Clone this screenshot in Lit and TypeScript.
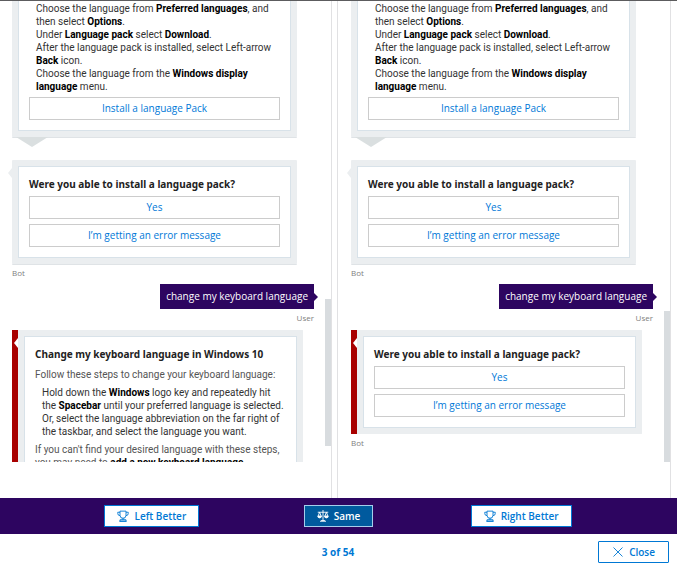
import { LitElement, html, css, svg, nothing } from "lit";
import { customElement, property } from "lit/decorators.js";

const trophy = svg`<path d="M4 1.500h8v5.500a4 4 0 0 1-8 0zM4 3H1v1.500A3 3 0 0 0 4 7.500M12 3h3v1.500A3 3 0 0 1 12 7.500M7 11v2M9 11v2M4 15V13h8v2zM3 15h10"/>`;
const scales = svg`<path d="M1 3h14M8 0v13.500M4 15h8M5.500 14h5M3.500 3 1.500 8M3.500 3l2 5M12.500 3l-2 5M12.500 3l2 5"/><path class="solid" d="M1 8h5a2.500 2.500 0 0 1-5 0zM10 8h5a2.500 2.500 0 0 1-5 0z"/>`;
const cross = svg`<path d="M2 2l12 12M14 2 2 14"/>`;

@customElement("chat-card")
class ChatCard extends LitElement {
  @property({ type: Boolean, reflect: true }) flagged = false;
  @property({ type: Boolean, reflect: true }) tail = false;
  static styles = css`
    :host { display: block; position: relative; box-sizing: border-box; width: 285px; max-width: 100%; border: 6px solid #ebeef0; border-radius: 1px; box-shadow: 0 1px 0 #dfe3e6; }
    :host([flagged]) { width: 291px; border-left: 0; box-shadow: none; display: flex; }
    .bar { flex: none; width: 6px; margin: -6px 0; background: #a80000; border-right: 6px solid #ebeef0; }
    .body { flex: 1; min-width: 0; box-sizing: border-box; background: #fff; border: 1px solid #d8e2e9; padding: 8px 10px 10px; }
    .notch { position: absolute; top: 2px; left: -10px; border: solid transparent; border-width: 5px 4px 5px 0; border-right-color: #ebeef0; }
    :host([flagged]) .notch { left: 2px; border-right-color: #fff; }
    .tail { position: absolute; top: calc(100% + 6px); left: -2px; border: solid transparent; border-width: 10px 16px 0; border-top-color: #dadfe0; }
  `;
  render() {
    return html`${this.flagged ? html`<div class="bar"></div>` : nothing}
      <div class="body"><slot></slot></div>
      <span class=${this.tail ? "tail" : "notch"}></span>`;
  }
}

@customElement("app-root")
class AppRoot extends LitElement {
  static styles = css`
    :host { display: flex; flex-direction: column; height: 100vh; overflow: hidden; box-sizing: border-box; border-top: 1px solid #5c5c5e; background: #fff; color: #333; font: 10px/13px "Open Sans", "Noto Sans", sans-serif; }
    button { font: inherit; cursor: pointer; }
    .panes { flex: 1; min-height: 0; display: flex; gap: 5px; padding-right: 6px; }
    .pane { flex: 1 1 0; min-width: 0; position: relative; padding: 0 0 36px 12px; border-right: 1px solid #e1e1e3; }
    .pane + .pane { padding-left: 13px; border-left: 1px solid #e1e1e3; }
    .chat { height: 100%; overflow: hidden; margin-left: -6px; padding-left: 6px; }
    .thumb { position: absolute; right: 0; width: 6px; top: 298px; height: 147px; background: #d8dcdf; }
    .right .thumb { top: 310px; height: 151px; }
    .first { margin-top: -27px; margin-bottom: 23px; }
    .steps { list-style: none; margin: 0; padding: 0 0 0 7px; color: #333; }
    .steps, p { font-family: Roboto, "Open Sans", sans-serif; }
    b { color: #000; font-weight: 700; }
    h2 { margin: 0 0 3px; font: 700 10px/18px "Noto Sans", "Open Sans", sans-serif; color: #222; }
    p { margin: 5px 0; color: #555; }
    .choice { display: block; width: 100%; box-sizing: border-box; height: 23px; padding: 0; border: 1px solid #ccc; background: #fff; color: #0078d7; }
    .choice + .choice { margin-top: 5px; }
    .steps + .choice { margin-top: 4px; }
    .who { font-size: 8px; line-height: 10px; color: #808080; margin-top: 4px; }
    .user { margin: 6px 17px 7px 0; display: flex; flex-direction: column; align-items: flex-end; }
    .bubble { position: relative; background: #2d0560; color: #fff; padding: 6px; }
    .bubble::after { content: ""; position: absolute; left: 100%; top: 9px; border: solid transparent; border-width: 4px 0 4px 4px; border-left-color: #2d0560; }
    .vote { display: grid; grid-template-columns: 1fr auto 1fr; justify-items: center; align-items: center; height: 36px; background: #2d0560; }
    .cell:last-child { padding-right: 8px; }
    .action { display: flex; align-items: center; justify-content: center; gap: 5px; height: 22px; box-sizing: border-box; padding: 0 12px; border: 1px solid #0078d4; background: #fff; color: #0078d4; font-weight: 600; }
    .action.on { background: #005a9e; border-color: #a5cdec; color: #fff; }
    .foot { display: grid; grid-template-columns: 1fr auto 1fr; align-items: center; padding: 7px 8px 2px 7px; color: #0078d4; font-weight: 700; }
    .foot .action { justify-self: end; border-radius: 1px; padding: 0 13px; }
    svg { width: 12px; height: 12px; fill: none; stroke: currentColor; stroke-width: 1.2; }
    .solid { fill: currentColor; }
  `;

  icon(shape: unknown) {
    return html`<svg viewBox="0 0 16 16" aria-hidden="true">${shape}</svg>`;
  }
  question() {
    return html`<h2>Were you able to install a language pack?</h2>
      <button class="choice">Yes</button><button class="choice">I’m getting an error message</button>`;
  }
  history() {
    return html`
      <chat-card class="first" tail>
        <ul class="steps">
          <li>Settings &gt; Time and language &gt; Language.</li>
          <li>Choose the language from <b>Preferred languages</b>, and then select <b>Options</b>.</li>
          <li>Under <b>Language pack</b> select <b>Download</b>.</li>
          <li>After the language pack is installed, select Left-arrow <b>Back</b> icon.</li>
          <li>Choose the language from the <b>Windows display language</b> menu.</li>
        </ul>
        <button class="choice">Install a language Pack</button>
      </chat-card>
      <chat-card>${this.question()}</chat-card>
      <div class="who">Bot</div>
      <div class="user"><div class="bubble">change my keyboard language</div><div class="who">User</div></div>`;
  }
  render() {
    return html`
      <main class="panes">
        <section class="pane left" aria-label="Left conversation">
          <div class="chat">
            ${this.history()}
            <chat-card flagged>
              <h2>Change my keyboard language in Windows 10</h2>
              <p>Follow these steps to change your keyboard language:</p>
              <ul class="steps"><li>Hold down the <b>Windows</b> logo key and repeatedly hit the <b>Spacebar</b> until your preferred language is selected. Or, select the language abbreviation on the far right of the taskbar, and select the language you want.</li></ul>
              <p>If you can't find your desired language with these steps, you may need to <b>add a new keyboard language</b>.</p>
            </chat-card>
          </div>
          <div class="thumb"></div>
        </section>
        <section class="pane right" aria-label="Right conversation">
          <div class="chat">
            ${this.history()}
            <chat-card flagged>${this.question()}</chat-card>
            <div class="who">Bot</div>
          </div>
          <div class="thumb"></div>
        </section>
      </main>
      <div class="vote">
        <div class="cell"><button class="action">${this.icon(trophy)}Left Better</button></div>
        <div class="cell"><button class="action on">${this.icon(scales)}Same</button></div>
        <div class="cell"><button class="action">${this.icon(trophy)}Right Better</button></div>
      </div>
      <footer class="foot"><span></span><span>3 of 54</span><button class="action">${this.icon(cross)}Close</button></footer>`;
  }
}
